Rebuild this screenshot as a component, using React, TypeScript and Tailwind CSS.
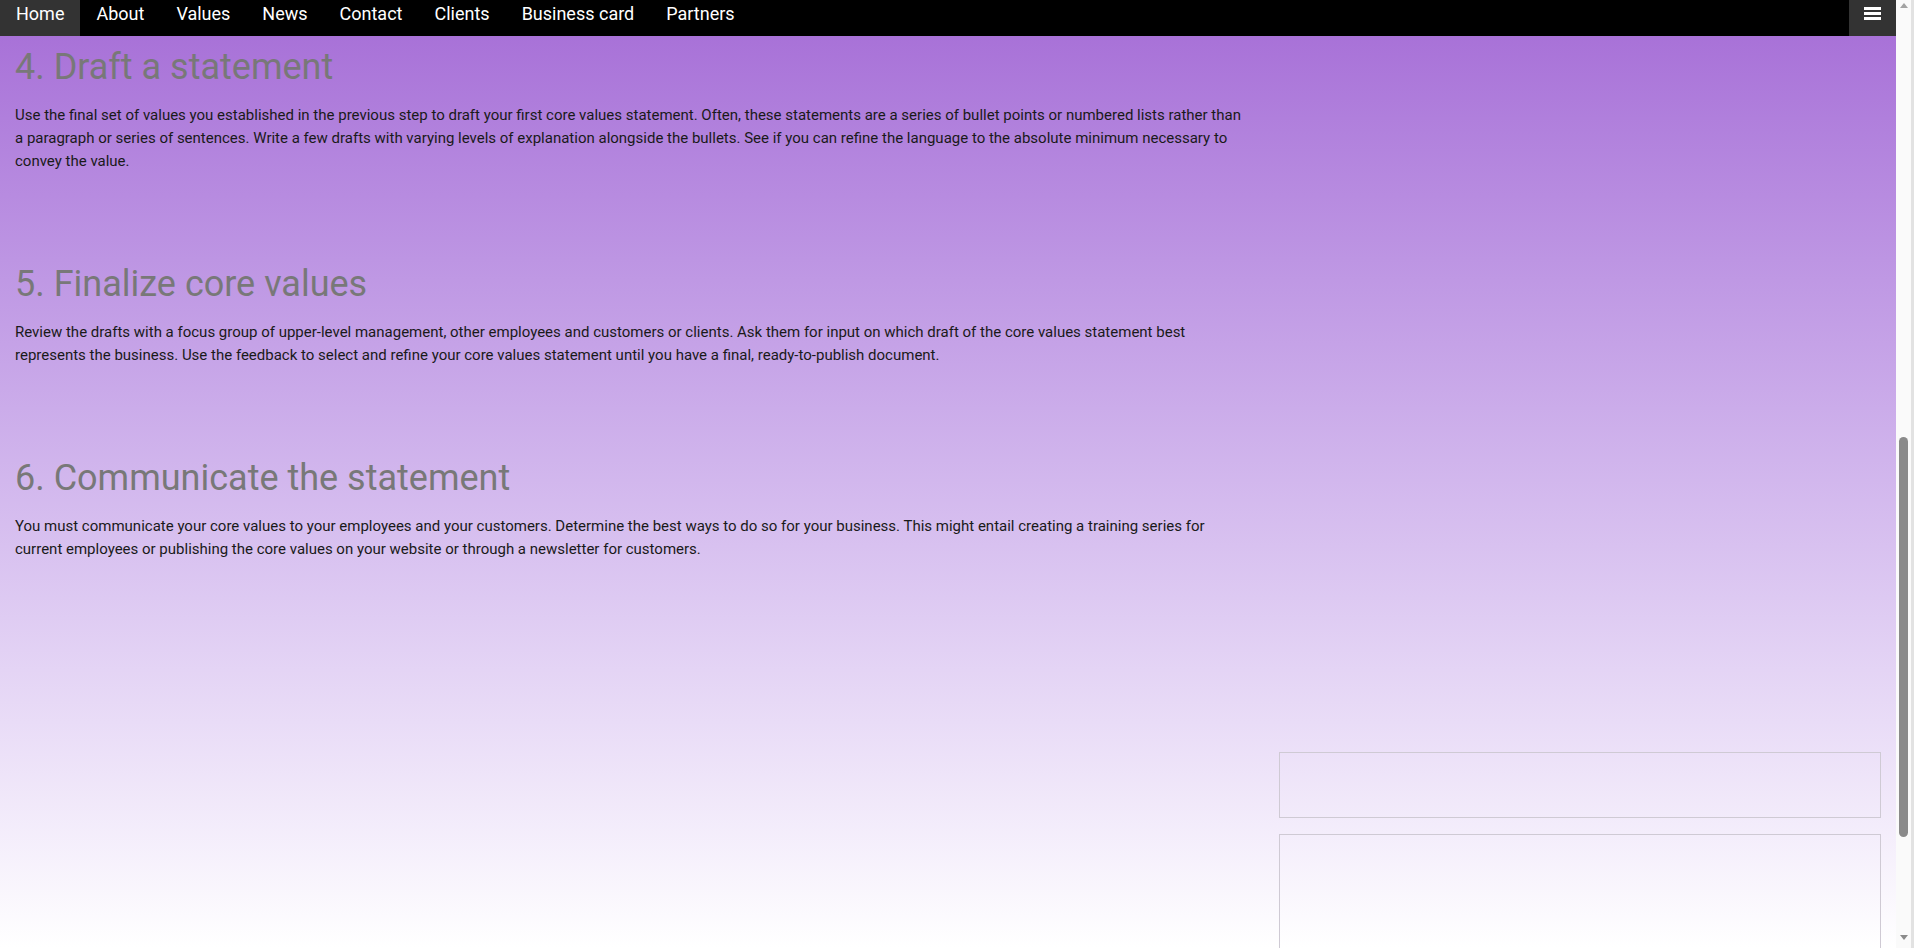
const navItems = [
  "Home",
  "About",
  "Values",
  "News",
  "Contact",
  "Clients",
  "Business card",
  "Partners",
];

const steps = [
  {
    title: "4. Draft a statement",
    body: "Use the final set of values you established in the previous step to draft your first core values statement. Often, these statements are a series of bullet points or numbered lists rather than a paragraph or series of sentences. Write a few drafts with varying levels of explanation alongside the bullets. See if you can refine the language to the absolute minimum necessary to convey the value.",
  },
  {
    title: "5. Finalize core values",
    body: "Review the drafts with a focus group of upper-level management, other employees and customers or clients. Ask them for input on which draft of the core values statement best represents the business. Use the feedback to select and refine your core values statement until you have a final, ready-to-publish document.",
  },
  {
    title: "6. Communicate the statement",
    body: "You must communicate your core values to your employees and your customers. Determine the best ways to do so for your business. This might entail creating a training series for current employees or publishing the core values on your website or through a newsletter for customers.",
  },
];

export default function App() {
  return (
    <div className="flex h-[948px] w-full overflow-hidden bg-white font-['Roboto',sans-serif]">
      <div className="flex min-w-0 flex-1 flex-col bg-gradient-to-b from-[#a56cd6] to-white">
        {/* Top nav */}
        <nav className="flex h-9 shrink-0 justify-between bg-black">
          <ul className="flex">
            {navItems.map((item, i) => (
              <li
                key={item}
                className={`h-9 px-4 text-[18px] leading-[28px] text-white ${
                  i === 0 ? "bg-[#333333]" : ""
                }`}
              >
                {item}
              </li>
            ))}
          </ul>
          <button className="flex h-9 w-[47px] items-start justify-center bg-[#333333] pt-[7px]">
            <svg width="17" height="13" viewBox="0 0 17 13">
              <rect x="0" y="0" width="17" height="3" fill="#fff" />
              <rect x="0" y="5" width="17" height="3" fill="#fff" />
              <rect x="0" y="10" width="17" height="3" fill="#fff" />
            </svg>
          </button>
        </nav>

        {/* Content */}
        <div className="flex flex-1">
          <main className="w-2/3 px-[15px] pt-[11px]">
            {steps.map((s) => (
              <section key={s.title} className="mb-[91px]">
                <h2 className="mb-[17px] text-[36px] font-normal leading-[40px] text-[#787878]">
                  {s.title}
                </h2>
                <p className="text-[15px] leading-[23px] text-[#1a1a1a]">
                  {s.body}
                </p>
              </section>
            ))}
          </main>
          <aside className="flex w-1/3 flex-col gap-4 px-[15px] pt-[716px]">
            <div className="h-[66px] shrink-0 border border-[#cfcad4]" />
            <div className="h-[200px] shrink-0 border border-[#cfcad4]" />
          </aside>
        </div>
      </div>

      {/* Scrollbar */}
      <div className="flex w-[18px] shrink-0 border-r-[3px] border-[#e2e2e2] bg-[#fafafa]">
        <div className="flex w-[15px] flex-col items-center">
          <div className="mt-[3px] h-0 w-0 border-x-[4px] border-b-[5px] border-x-transparent border-b-[#a3a3a3]" />
          <div className="mt-[429px] h-[400px] w-[9px] rounded-full bg-[#8a8a8a]" />
          <div className="mt-auto mb-[8px] h-0 w-0 border-x-[4px] border-t-[5px] border-x-transparent border-t-[#8a8a8a]" />
        </div>
      </div>
    </div>
  );
}
